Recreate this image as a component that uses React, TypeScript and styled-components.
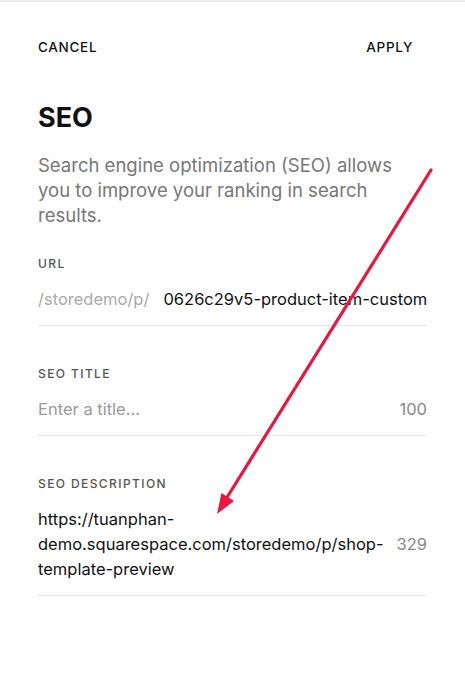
import React from "react";
import styled, { createGlobalStyle } from "styled-components";

const Global = createGlobalStyle`
  html, body { margin: 0; padding: 0; background: #fff; }
  body { font-family: Inter, "Helvetica Neue", Arial, sans-serif; -webkit-font-smoothing: antialiased; }
`;

const Page = styled.div`
  position: relative;
  width: 465px;
  height: 700px;
  box-sizing: border-box;
  padding: 0 38px;
  border-top: 2px solid #eeeeee;
  overflow: hidden;
`;

const TopBar = styled.div`
  display: flex;
  justify-content: space-between;
  align-items: center;
  padding: 35px 14px 0 0;
`;

const BarButton = styled.button`
  border: 0;
  background: none;
  padding: 0;
  font-family: inherit;
  font-size: 13.5px;
  font-weight: 500;
  letter-spacing: 0.7px;
  color: #111;
  line-height: 20px;
`;

const Title = styled.h1`
  margin: 44px 0 0;
  font-size: 27px;
  font-weight: 700;
  line-height: 34px;
  color: #111;
`;

const Intro = styled.p`
  margin: 18px 0 0;
  max-width: 372px;
  font-size: 18.5px;
  line-height: 25px;
  color: #777;
  font-weight: 400;
`;

const Field = styled.div<{ $first?: boolean }>`
  margin-top: ${(p) => (p.$first ? "28px" : "40px")};
  border-bottom: 1px solid #e6e6e6;
`;

const Label = styled.div`
  font-size: 12px;
  font-weight: 500;
  letter-spacing: 1.4px;
  color: #555;
  line-height: 16px;
  text-transform: uppercase;
`;

const Row = styled.div`
  display: flex;
  align-items: center;
  gap: 14px;
  padding: 15px 0 13px;
  font-size: 16.5px;
  line-height: 25px;
  white-space: nowrap;
  overflow: hidden;
`;

const Prefix = styled.span`
  color: #aaa;
  flex: none;
`;

const Value = styled.span<{ $wrap?: boolean }>`
  color: #111;
  flex: 1;
  min-width: 0;
  overflow: hidden;
  white-space: ${(p) => (p.$wrap ? "normal" : "nowrap")};
`;

const Placeholder = styled.span`
  color: #999;
  flex: 1;
`;

const Count = styled.span`
  color: #888;
  flex: none;
`;

const Arrow = styled.svg`
  position: absolute;
  left: 0;
  top: 0;
  pointer-events: none;
`;

export default function App() {
  return (
    <>
      <Global />
      <Page>
        <TopBar>
          <BarButton>CANCEL</BarButton>
          <BarButton>APPLY</BarButton>
        </TopBar>
        <Title>SEO</Title>
        <Intro>
          Search engine optimization (SEO) allows you to improve your ranking in search results.
        </Intro>
        <Field $first>
          <Label>URL</Label>
          <Row>
            <Prefix>/storedemo/p/</Prefix>
            <Value>0626c29v5-product-item-custom-product-page</Value>
          </Row>
        </Field>
        <Field>
          <Label>SEO Title</Label>
          <Row>
            <Placeholder>Enter a title...</Placeholder>
            <Count>100</Count>
          </Row>
        </Field>
        <Field>
          <Label>SEO Description</Label>
          <Row>
            <Value $wrap>
              https://tuanphan-
              <br />
              demo.squarespace.com/storedemo/p/shop-
              <br />
              template-preview
            </Value>
            <Count>329</Count>
          </Row>
        </Field>
        <Arrow width="465" height="700" viewBox="0 0 465 700">
          <line x1="431" y1="168" x2="226" y2="497" stroke="#e8173f" strokeWidth="3.2" strokeLinecap="round" />
          <polygon points="217,512 221.5,491 234,499" fill="#e8173f" />
        </Arrow>
      </Page>
    </>
  );
}
